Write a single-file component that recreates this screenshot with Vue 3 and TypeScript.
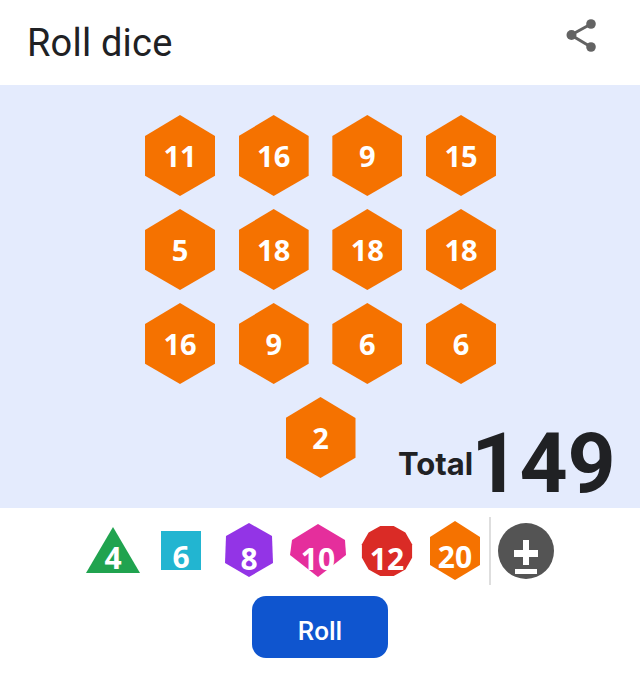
<script setup lang="ts">
const rolls: number[] = [11, 16, 9, 15, 5, 18, 18, 18, 16, 9, 6, 6, 2]

interface DieType {
  label: number
  name: string
  points: string
  w: number
  h: number
  color: string
}

const dice: DieType[] = [
  { label: 4, name: 'd4', points: '27,0 54,46 0,46', w: 54, h: 46, color: '#20a34f' },
  { label: 6, name: 'd6', points: '0,0 40,0 40,39 0,39', w: 40, h: 39, color: '#22b5d1' },
  { label: 8, name: 'd8', points: '24,0 47,13 48,40 24,54 0,40 1,13', w: 48, h: 54, color: '#9334e6' },
  { label: 10, name: 'd10', points: '28,0 55,16 56,31 28,53 0,31 2,16', w: 56, h: 53, color: '#e52e9c' },
  { label: 12, name: 'd12', points: '32.7,.9 44.4,7.6 51.1,19.3 51.1,32.7 44.4,44.4 32.7,51.1 19.3,51.1 7.6,44.4 .9,32.7 .9,19.3 7.6,7.6 19.3,.9', w: 52, h: 52, color: '#da2b26' },
  { label: 20, name: 'd20', points: '25,0 50,16 50,44 25,59 0,44 0,16', w: 50, h: 59, color: '#f57200' },
]
</script>

<template>
  <main class="card">
    <header class="top">
      <h1 class="title">Roll dice</h1>
      <svg class="share" viewBox="0 0 32 34" width="32" height="34" aria-label="Share">
        <path d="M25 5 5 16l20 12" fill="none" stroke="#636363" stroke-width="3" />
        <circle cx="25" cy="5" r="4.8" fill="#636363" />
        <circle cx="5.5" cy="16" r="5" fill="#636363" />
        <circle cx="25" cy="28" r="4.8" fill="#636363" />
      </svg>
    </header>

    <section class="board">
      <div class="rolls">
        <div v-for="(n, i) in rolls" :key="i" class="roll">{{ n }}</div>
      </div>
      <div class="total">
        <span class="total-label">Total</span>
        <span class="total-value">149</span>
      </div>
    </section>

    <section class="picker">
      <button v-for="d in dice" :key="d.name" class="pick" :class="d.name" type="button">
        <svg class="shape" :width="d.w" :height="d.h" :viewBox="`0 0 ${d.w} ${d.h}`">
          <polygon :points="d.points" :fill="d.color" />
        </svg>
        <span class="pick-num">{{ d.label }}</span>
      </button>
      <span class="divider"></span>
      <button class="modifier" type="button" aria-label="Modifier">
        <svg viewBox="0 0 56 56" width="56" height="56">
          <circle cx="28" cy="28" r="28" fill="#545454" />
          <path d="M25 17h6v10h9v7h-9v8h-6v-8h-9v-7h9z" fill="#fff" />
          <rect x="17" y="46" width="22" height="5" fill="#fff" />
        </svg>
      </button>
    </section>

    <div class="actions">
      <button class="roll-btn" type="button">Roll</button>
    </div>
  </main>
</template>

<style>
html, body { margin: 0; background: #fff; }
</style>

<style scoped>
.card {
  width: 640px;
  height: 684px;
  background: #fff;
  font-family: "Open Sans", sans-serif;
  display: flex;
  flex-direction: column;
  overflow: hidden;
}
.top {
  height: 85px;
  display: flex;
  align-items: flex-start;
  justify-content: space-between;
  padding: 0 42px 0 27px;
  box-sizing: border-box;
}
.title {
  margin: 21px 0 0;
  font: 400 38px/44px Roboto, sans-serif;
  letter-spacing: .2px;
  color: #202124;
}
.share { margin-top: 19px; }
.board {
  position: relative;
  height: 423px;
  background: #e4ebfd;
  padding-top: 30px;
  box-sizing: border-box;
}
.rolls {
  width: 376px;
  margin-left: 132.5px;
  display: flex;
  flex-wrap: wrap;
  justify-content: center;
  gap: 13px 23.67px;
}
.roll {
  width: 70px;
  height: 81px;
  background: #f57200;
  clip-path: polygon(50% 0, 100% 26%, 100% 75%, 50% 100%, 0 75%, 0 26%);
  color: #fff;
  display: flex;
  align-items: center;
  justify-content: center;
  font: 700 29px/1 "Open Sans", sans-serif;
}
.total {
  position: absolute;
  left: 398px;
  bottom: 2px;
  display: flex;
  align-items: flex-start;
  color: #202124;
  font-weight: 700;
}
.total-label {
  font: 700 31px/1 Inter, sans-serif;
  margin-top: 26px;
}
.total-value {
  font: 700 84px/1 Roboto, sans-serif;
  margin-left: -2px;
}
.picker {
  height: 88px;
  display: flex;
  align-items: flex-start;
  position: relative;
}
.pick {
  position: relative;
  padding: 0;
  border: 0;
  background: none;
  display: block;
}
.shape { display: block; }
.pick-num {
  position: absolute;
  left: -10px;
  right: -10px;
  bottom: 1px;
  text-align: center;
  color: #fff;
  font: 700 30px/34px "Open Sans", sans-serif;
}
.d4 { margin: 19px 0 0 86px; }
.d6 { margin: 23px 0 0 21px; }
.d8 { margin: 15px 0 0 24px; }
.d10 { margin: 16px 0 0 17px; }
.d12 { margin: 17px 0 0 15px; }
.d20 { margin: 13px 0 0 17px; }
.d4 .pick-num { bottom: -2px; }
.d6 .pick-num { bottom: -4px; }
.d20 .pick-num { bottom: 6px; }
.divider {
  width: 2px;
  height: 68px;
  margin: 9px 0 0 9px;
  background: #dedede;
}
.modifier {
  padding: 0;
  border: 0;
  background: none;
  margin: 15px 0 0 7px;
  line-height: 0;
}
.actions {
  display: flex;
  justify-content: center;
}
.roll-btn {
  width: 136px;
  height: 62px;
  padding: 8px 0 0;
  border: 0;
  border-radius: 14px;
  background: #0f55cf;
  color: #fff;
  font: 500 26px/1 Roboto, sans-serif;
}
</style>
